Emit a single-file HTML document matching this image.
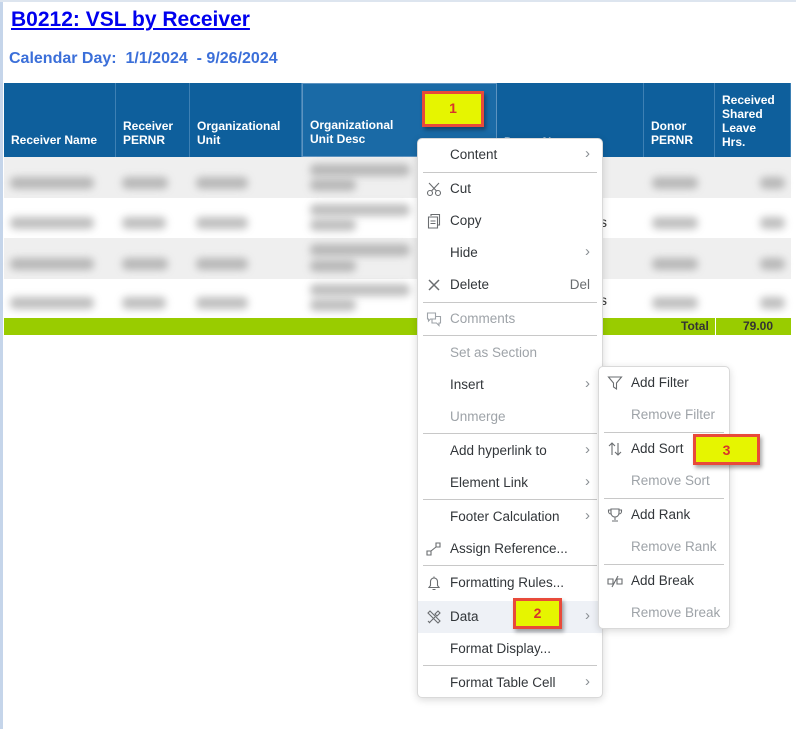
<!DOCTYPE html>
<html><head><meta charset="utf-8"><style>
*{margin:0;padding:0;box-sizing:border-box}
body{width:796px;height:729px;background:#fff;position:relative;overflow:hidden;font-family:"Liberation Sans",Arial,sans-serif}
.abs{position:absolute}
.h{position:absolute;top:83px;height:74px;background:#0e5f9c;color:#fff;font-weight:bold;font-size:12px;line-height:14px;padding:0 0 10px 7px;display:flex;align-items:flex-end;border-right:1px solid #3d80b4}
.row{position:absolute;left:4px;width:787px}
.bl{position:absolute;height:12px;background:#8a8a8a;filter:blur(4px);opacity:.55;border-radius:5px}
.menu{position:absolute;background:#fff;border:1px solid #d9d9d9;border-radius:5px;box-shadow:0 2px 8px rgba(0,0,0,.15);font-family:"Liberation Sans",sans-serif;font-size:13.5px;color:#32363a}
.it{position:absolute;left:0;right:0;height:32px;line-height:32px;padding-left:32px}
.dis{color:#9ea3a8}
.sep{position:absolute;left:5px;right:5px;height:1px;background:#c8c8c8}
.ar{position:absolute;right:12px;top:-1px;color:#8a8f94;font-size:15px}
.ic{position:absolute;left:8px;top:8px;width:16px;height:16px}
.call{position:absolute;background:#e6f500;border:3px solid #e84a3a;box-shadow:2px 3px 4px rgba(0,0,0,.35);color:#d8342a;font-weight:bold;font-size:14px;text-align:center}
</style></head><body>
<div class="abs" style="left:0;top:0;width:3px;height:729px;background:#c5d5ea"></div>
<div class="abs" style="left:0;top:0;width:796px;height:2px;background:#dde5ef"></div>
<div class="abs" style="left:11px;top:8px;font-size:21px;font-weight:bold;color:#0000ee;text-decoration:underline">B0212: VSL by Receiver</div>
<div class="abs" style="left:9px;top:50px;font-size:16px;font-weight:bold;color:#3b6fd9;white-space:pre">Calendar Day:  1/1/2024  - 9/26/2024</div>

<div class="h" style="left:4px;width:112px">Receiver Name</div>
<div class="h" style="left:116px;width:74px">Receiver<br>PERNR</div>
<div class="h" style="left:190px;width:112px">Organizational<br>Unit</div>
<div class="h" style="left:302px;width:195px;background:#1a6aa6;border:1px solid #5d93c0">Organizational<br>Unit Desc</div>
<div class="h" style="left:497px;width:147px;padding-bottom:8px">Donor N</div>
<div class="h" style="left:644px;width:71px">Donor<br>PERNR</div>
<div class="h" style="left:715px;width:76px;align-items:flex-start;padding-top:10px">Received<br>Shared<br>Leave<br>Hrs.</div>

<div class="row" style="top:157px;height:41px;background:#efefef"></div>
<div class="row" style="top:198px;height:40px;background:#fff"></div>
<div class="row" style="top:238px;height:41px;background:#efefef"></div>
<div class="row" style="top:279px;height:39px;background:#fff"></div>
<div class="row" style="top:318px;height:17px;background:#99cc00;font-size:12px;font-weight:bold;color:#333">
<span class="abs" style="left:677px;top:1px">Total</span><span class="abs" style="left:711px;top:0;width:1px;height:17px;background:#fff"></span><span class="abs" style="left:739px;top:1px">79.00</span></div>

<div class="bl" style="left:10px;top:177px;width:84px"></div><div class="bl" style="left:122px;top:177px;width:46px"></div><div class="bl" style="left:196px;top:177px;width:52px"></div><div class="bl" style="left:310px;top:164px;width:100px"></div><div class="bl" style="left:310px;top:179px;width:46px"></div><div class="bl" style="left:652px;top:177px;width:46px"></div><div class="bl" style="left:760px;top:177px;width:25px"></div>
<div class="bl" style="left:10px;top:217px;width:84px"></div><div class="bl" style="left:122px;top:217px;width:44px"></div><div class="bl" style="left:196px;top:217px;width:52px"></div><div class="bl" style="left:310px;top:204px;width:100px"></div><div class="bl" style="left:310px;top:219px;width:46px"></div><div class="bl" style="left:652px;top:217px;width:46px"></div><div class="bl" style="left:760px;top:217px;width:25px"></div>
<div class="bl" style="left:10px;top:258px;width:84px"></div><div class="bl" style="left:122px;top:258px;width:46px"></div><div class="bl" style="left:196px;top:258px;width:52px"></div><div class="bl" style="left:310px;top:244px;width:100px"></div><div class="bl" style="left:310px;top:260px;width:46px"></div><div class="bl" style="left:652px;top:258px;width:46px"></div><div class="bl" style="left:760px;top:258px;width:25px"></div>
<div class="bl" style="left:10px;top:297px;width:84px"></div><div class="bl" style="left:122px;top:297px;width:44px"></div><div class="bl" style="left:196px;top:297px;width:52px"></div><div class="bl" style="left:310px;top:284px;width:100px"></div><div class="bl" style="left:310px;top:299px;width:46px"></div><div class="bl" style="left:652px;top:297px;width:46px"></div><div class="bl" style="left:760px;top:297px;width:25px"></div>
<div class="abs" style="left:600px;top:214px;font-size:14px;color:#333">s</div>
<div class="abs" style="left:600px;top:292px;font-size:14px;color:#333">s</div>

<div class="call" style="left:422px;top:91px;width:62px;height:36px;line-height:28px">1</div>

<div class="menu" style="left:417px;top:138px;width:186px;height:560px">
<div class="it" style="top:0">Content<span class="ar">›</span></div>
<div class="sep" style="top:33px"></div>
<div class="it" style="top:34px"><svg class="ic" viewBox="0 0 16 16" fill="none" stroke="#6a6d70" stroke-width="1.1"><circle cx="4" cy="12" r="2.5"/><circle cx="12" cy="12" r="2.5"/><path d="M5.5 10L13 2M10.5 10L3 2"/></svg>Cut</div>
<div class="it" style="top:66px"><svg class="ic" viewBox="0 0 16 16" fill="none" stroke="#6a6d70" stroke-width="1.1"><path d="M5 3V1.5h8.5V12H12"/><path d="M2.5 4h9v11h-9zM4.5 8h5M4.5 10.5h5"/></svg>Copy</div>
<div class="it" style="top:98px">Hide<span class="ar">›</span></div>
<div class="it" style="top:130px"><svg class="ic" viewBox="0 0 16 16" fill="none" stroke="#6a6d70" stroke-width="1.5"><path d="M3 3l10 10M13 3L3 13"/></svg>Delete<span class="ar" style="color:#6a6d70;font-size:13.5px;top:0">Del</span></div>
<div class="sep" style="top:163px"></div>
<div class="it dis" style="top:164px"><svg class="ic" viewBox="0 0 16 16" fill="none" stroke="#9ea3a8" stroke-width="1.1"><path d="M1.5 2h8v6h-5l-2 2V8h-1zM6 8v4h4.5l2.5 2.5V12h1.5V5.5H9.5"/></svg>Comments</div>
<div class="sep" style="top:196px"></div>
<div class="it dis" style="top:198px">Set as Section</div>
<div class="it" style="top:230px">Insert<span class="ar">›</span></div>
<div class="it dis" style="top:262px">Unmerge</div>
<div class="sep" style="top:294px"></div>
<div class="it" style="top:296px">Add hyperlink to<span class="ar">›</span></div>
<div class="it" style="top:328px">Element Link<span class="ar">›</span></div>
<div class="sep" style="top:360px"></div>
<div class="it" style="top:362px">Footer Calculation<span class="ar">›</span></div>
<div class="it" style="top:394px"><svg class="ic" viewBox="0 0 16 16" fill="none" stroke="#6a6d70" stroke-width="1.1"><path d="M1 10h4v4H1zM10 2h4v4h-4zM5 10l5-4"/></svg>Assign Reference...</div>
<div class="sep" style="top:426px"></div>
<div class="it" style="top:428px"><svg class="ic" viewBox="0 0 16 16" fill="none" stroke="#6a6d70" stroke-width="1.1"><path d="M3 12.5h10l-1.5-2V6.5a3.5 3.5 0 0 0-7 0v4zM6.5 14.5h3M8 1.5v1.5"/></svg>Formatting Rules...</div>
<div class="it" style="top:462px;background:#eef1f6"><svg class="ic" viewBox="0 0 16 16" fill="none" stroke="#6a6d70" stroke-width="1.1"><path d="M2 4l2-2 10 10-2 2zM3 14l6-6M12 2l2 2-3 3-2-2zM2 12l2 2"/></svg>Data<span class="ar">›</span></div>
<div class="it" style="top:494px">Format Display...</div>
<div class="sep" style="top:526px"></div>
<div class="it" style="top:528px">Format Table Cell<span class="ar">›</span></div>
</div>

<div class="menu" style="left:598px;top:366px;width:132px;height:263px">
<div class="it" style="top:0"><svg class="ic" viewBox="0 0 16 16" fill="none" stroke="#6a6d70" stroke-width="1.1"><path d="M1.5 2h13l-5 6v6l-3-2V8z"/></svg>Add Filter</div>
<div class="it dis" style="top:32px">Remove Filter</div>
<div class="sep" style="top:65px"></div>
<div class="it" style="top:66px"><svg class="ic" viewBox="0 0 16 16" fill="none" stroke="#6a6d70" stroke-width="1.1"><path d="M5 14V2M2 5l3-3 3 3M11 2v12M8 11l3 3 3-3"/></svg>Add Sort</div>
<div class="it dis" style="top:98px">Remove Sort</div>
<div class="sep" style="top:131px"></div>
<div class="it" style="top:132px"><svg class="ic" viewBox="0 0 16 16" fill="none" stroke="#6a6d70" stroke-width="1.1"><path d="M4 2h8v4a4 4 0 0 1-8 0zM4 3H1.5v1.5A2.5 2.5 0 0 0 4 7M12 3h2.5v1.5A2.5 2.5 0 0 1 12 7M8 10v3M5 14h6"/></svg>Add Rank</div>
<div class="it dis" style="top:164px">Remove Rank</div>
<div class="sep" style="top:197px"></div>
<div class="it" style="top:198px"><svg class="ic" viewBox="0 0 16 16" fill="none" stroke="#6a6d70" stroke-width="1.1"><path d="M1 6h5v5H1zM10 6h5v5h-5zM5 14L11 3"/></svg>Add Break</div>
<div class="it dis" style="top:230px">Remove Break</div>
</div>

<div class="call" style="left:513px;top:598px;width:49px;height:31px;line-height:24px">2</div>
<div class="call" style="left:693px;top:434px;width:67px;height:31px;line-height:26px">3</div>
</body></html>
